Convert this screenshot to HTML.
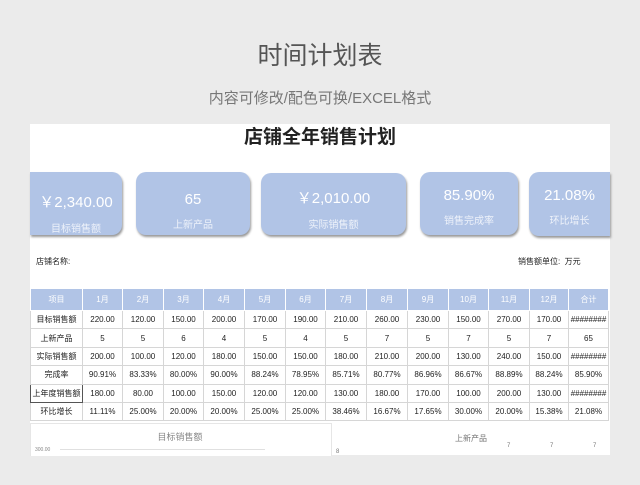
<!DOCTYPE html>
<html><head><meta charset="utf-8"><style>
body{margin:0;width:640px;height:485px;background:#ebebeb;font-family:"Liberation Sans","Noto Sans CJK SC",sans-serif;position:relative;overflow:hidden}
.a{position:absolute}
.card{position:absolute;background:#b1c4e6;border-radius:10px;box-shadow:1px 2px 2px #999;color:#fff;text-align:center}
.card .v{font-size:15px;margin-top:19px}
.card .l{font-size:10px;margin-top:8px;color:#eef2fa}
table{position:absolute;left:30px;top:288px;border-collapse:collapse;font-size:8px;background:#fff}
td{border:1px solid #d6d6d6;text-align:center;padding:0;height:17.4px;color:#222}
tr.h td{background:#b1c4e6;color:#fff;height:21px;border-color:#fff}
</style></head><body>
<div class="a" style="left:0;top:36px;width:640px;text-align:center;font-size:25px;color:#555">时间计划表</div>
<div class="a" style="left:0;top:87px;width:640px;text-align:center;font-size:15px;color:#777">内容可修改/配色可换/EXCEL格式</div>
<div class="a" style="left:30px;top:124px;width:580px;height:331px;background:#fff"></div>
<div class="a" style="left:30px;top:122px;width:580px;text-align:center;font-size:19px;font-weight:bold;color:#222">店铺全年销售计划</div>
<div class="card" style="left:30px;top:172px;width:92px;height:63px;border-radius:0 10px 10px 0"><div class="v">￥2,340.00</div><div class="l">目标销售额</div></div>
<div class="card" style="left:136px;top:172px;width:114px;height:63px"><div class="v">65</div><div class="l">上新产品</div></div>
<div class="card" style="left:261px;top:173px;width:145px;height:62px"><div class="v" style="margin-top:14px">￥2,010.00</div><div class="l">实际销售额</div></div>
<div class="card" style="left:420px;top:172px;width:98px;height:63px"><div class="v" style="margin-top:15px">85.90%</div><div class="l">销售完成率</div></div>
<div class="card" style="left:529px;top:172px;width:81px;height:64px;border-radius:10px 0 0 10px"><div class="v" style="margin-top:15px">21.08%</div><div class="l">环比增长</div></div>
<div class="a" style="left:36px;top:256px;font-size:8px;color:#222">店铺名称:</div>
<div class="a" style="left:518px;top:256px;font-size:8px;color:#222">销售额单位:&nbsp; 万元</div>
<table>
<colgroup><col style="width:52px"><col style="width:40px"><col style="width:41px"><col style="width:40px"><col style="width:41px"><col style="width:41px"><col style="width:40px"><col style="width:41px"><col style="width:41px"><col style="width:41px"><col style="width:40px"><col style="width:41px"><col style="width:39px"><col style="width:40px"></colgroup>
<tr class="h"><td>项目</td><td>1月</td><td>2月</td><td>3月</td><td>4月</td><td>5月</td><td>6月</td><td>7月</td><td>8月</td><td>9月</td><td>10月</td><td>11月</td><td>12月</td><td>合计</td></tr>
<tr><td>目标销售额</td><td>220.00</td><td>120.00</td><td>150.00</td><td>200.00</td><td>170.00</td><td>190.00</td><td>210.00</td><td>260.00</td><td>230.00</td><td>150.00</td><td>270.00</td><td>170.00</td><td>########</td></tr>
<tr><td>上新产品</td><td>5</td><td>5</td><td>6</td><td>4</td><td>5</td><td>4</td><td>5</td><td>7</td><td>5</td><td>7</td><td>5</td><td>7</td><td>65</td></tr>
<tr><td>实际销售额</td><td>200.00</td><td>100.00</td><td>120.00</td><td>180.00</td><td>150.00</td><td>150.00</td><td>180.00</td><td>210.00</td><td>200.00</td><td>130.00</td><td>240.00</td><td>150.00</td><td>########</td></tr>
<tr><td>完成率</td><td>90.91%</td><td>83.33%</td><td>80.00%</td><td>90.00%</td><td>88.24%</td><td>78.95%</td><td>85.71%</td><td>80.77%</td><td>86.96%</td><td>86.67%</td><td>88.89%</td><td>88.24%</td><td>85.90%</td></tr>
<tr><td style="border:1px solid #555">上年度销售额</td><td>180.00</td><td>80.00</td><td>100.00</td><td>150.00</td><td>120.00</td><td>120.00</td><td>130.00</td><td>180.00</td><td>170.00</td><td>100.00</td><td>200.00</td><td>130.00</td><td>########</td></tr>
<tr><td>环比增长</td><td>11.11%</td><td>25.00%</td><td>20.00%</td><td>20.00%</td><td>25.00%</td><td>25.00%</td><td>38.46%</td><td>16.67%</td><td>17.65%</td><td>30.00%</td><td>20.00%</td><td>15.38%</td><td>21.08%</td></tr>
</table>
<div class="a" style="left:30px;top:423px;width:300px;height:32px;border:1px solid #e6e6e6;border-bottom:none;background:#fff"></div>
<div class="a" style="left:30px;top:430px;width:300px;text-align:center;font-size:9px;color:#888">目标销售额</div>
<div class="a" style="left:35px;top:447px;font-size:5px;color:#888">300.00</div>
<div class="a" style="left:60px;top:449px;width:205px;height:1px;background:#e0e0e0"></div>
<div class="a" style="left:455px;top:433px;font-size:8px;color:#777">上新产品</div>
<div class="a" style="left:507px;top:443px;font-size:6px;color:#777">7</div>
<div class="a" style="left:550px;top:443px;font-size:6px;color:#777">7</div>
<div class="a" style="left:593px;top:443px;font-size:6px;color:#777">7</div>
<div class="a" style="left:336px;top:449px;font-size:6px;color:#777">8</div>
</body></html>
